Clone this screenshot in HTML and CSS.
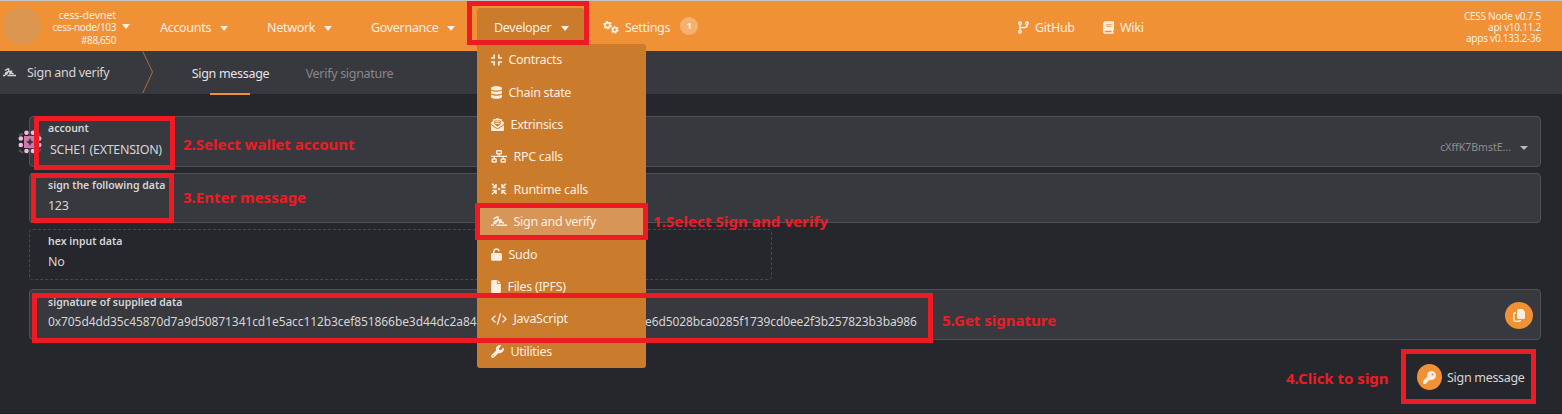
FILE: index.html
```
<!DOCTYPE html>
<html lang="en">
<head>
<meta charset="utf-8">
<title>Sign and verify</title>
<link rel="stylesheet" href="styles.css">
</head>
<body>
<div class="page">
  <header class="topbar">
    <div class="chain"><span class="logo"></span>
      <div class="chain-info"><span>cess-devnet</span><span class="tight">cess-node/103</span><span class="block">#88,650</span></div>
      <i class="caret"></i>
    </div>
    <nav class="nav">
      <a class="nav-item accounts">Accounts<i class="caret"></i></a>
      <a class="nav-item network">Network<i class="caret"></i></a>
      <a class="nav-item governance">Governance<i class="caret"></i></a>
      <div class="developer">
        <a class="nav-item dev-tab">Developer<i class="caret"></i></a>
        <div class="menu">
          <a class="menu-item"><svg width="11" height="12" viewBox="0 0 11 12" fill="none" stroke="currentColor" stroke-width="1.6"><path d="M0 4H3.200V.5M7.800 .5V4H11M0 8H3.200V11.500M7.800 11.500V8H11"/></svg>Contracts</a>
          <a class="menu-item"><svg width="11" height="13" viewBox="0 0 11 13" fill="currentColor"><path d="M0 2C0-.4 11-.4 11 2V3C11 5 0 5 0 3ZM0 4.700Q5.500 7 11 4.700V6.800C11 9 0 9 0 6.800ZM0 8.500Q5.500 11 11 8.500V11C11 13.400 0 13.400 0 11Z"/></svg>Chain state</a>
          <a class="menu-item"><svg width="13" height="13" viewBox="0 0 13 13" fill="currentColor" fill-rule="evenodd"><path d="M0 5Q0 4.500 .6 4L2 3V2Q2 1 3 1H4.500L6.500 0 8.500 1H10Q11 1 11 2V3L12.400 4Q13 4.500 13 5V6L8 9.500Q6.500 10.500 5 9.500L0 6ZM3.300 2.500V6L6 8.200Q6.500 8.500 7 8.200L9.700 6V2.500ZM4.300 3.300H8.700V4.200H4.300ZM4.300 5H8.700V5.900H4.300Z"/><path d="M0 6.900 4.500 10.200Q6.500 11.500 8.500 10.200L13 6.900V11.700Q13 13 11.700 13H1.300Q0 13 0 11.700Z"/></svg>Extrinsics</a>
          <a class="menu-item"><svg width="16" height="13" viewBox="0 0 16 13" fill="none" stroke="currentColor" stroke-width="1.400"><rect x="5.600" y=".8" width="4.800" height="3" rx=".6"/><rect x="1.200" y="9" width="4" height="3" rx=".6"/><rect x="10.200" y="9" width="4" height="3" rx=".6"/><path d="M8 4V6.300M0 6.400H16M3.300 6.400V9M12.300 6.400V9"/></svg>RPC calls</a>
          <a class="menu-item"><svg width="16" height="12" viewBox="0 0 16 12" fill="none" stroke="currentColor" stroke-width="1.500"><path d="M1 .7 5 4.300M15 .7 11 4.300M1 11.300 5 7.700M15 11.300 11 7.700M5 1V4.500H1.500M11 1V4.500H14.500M5 11V7.500H1.500M11 11V7.500H14.500"/><circle cx="8" cy="6" r="1.200" fill="currentColor" stroke="none"/></svg>Runtime calls</a>
          <a class="menu-item selected"><svg width="16" height="11" viewBox="0 0 16 11" fill="none" stroke="currentColor" stroke-width="1.400"><path d="M3 3.300V2.500L6 1Q7.500 .5 7.200 2.200L6.300 4.500Q3 5.500 2.800 7Q3 8.500 4.700 7.300L6.300 4.500L9.500 4 8.300 6.800Q9.500 7.200 10.500 5.500Q10.500 7 13 6.800M0 9.200H3M5.500 9.200H16"/></svg>Sign and verify</a>
          <a class="menu-item"><svg width="11" height="13" viewBox="0 0 448 512" fill="currentColor"><path d="M144 144c0-44.200 35.800-80 80-80c31.900 0 59.400 18.600 72.300 45.700c7.600 16 26.700 22.800 42.600 15.200s22.800-26.700 15.200-42.600C331 33.700 281.500 0 224 0C144.500 0 80 64.500 80 144v48H64c-35.300 0-64 28.700-64 64V448c0 35.300 28.700 64 64 64H384c35.300 0 64-28.700 64-64V256c0-35.300-28.700-64-64-64H144V144z"/></svg>Sudo</a>
          <a class="menu-item"><svg width="10" height="13" viewBox="0 0 384 512" fill="currentColor"><path d="M0 64C0 28.700 28.700 0 64 0H224V128c0 17.700 14.300 32 32 32H384V448c0 35.300-28.700 64-64 64H64c-35.300 0-64-28.700-64-64V64zm384 64H256V0L384 128z"/></svg>Files (IPFS)</a>
          <a class="menu-item"><svg width="16" height="12" viewBox="0 0 16 12" fill="none" stroke="currentColor" stroke-width="1.400" stroke-linecap="round" stroke-linejoin="round"><path d="M4 3 1 6 4 9M12 3 15 6 12 9M9.500 .8 6.500 11.200"/></svg>JavaScript</a>
          <a class="menu-item"><svg width="13" height="13" viewBox="0 0 512 512" fill="currentColor"><path d="M352 320c88.400 0 160-71.600 160-160c0-15.300-2.200-30.100-6.200-44.200c-3.100-10.800-16.400-13.200-24.300-5.300l-76.800 76.800c-3 3-7.100 4.700-11.300 4.700H336c-8.800 0-16-7.200-16-16V118.600c0-4.200 1.700-8.300 4.700-11.300l76.800-76.800c7.900-7.900 5.400-21.200-5.300-24.300C382.100 2.200 367.300 0 352 0C263.600 0 192 71.600 192 160c0 19.100 3.400 37.500 9.500 54.500L19.900 396.100C7.200 408.800 0 426.100 0 444.100C0 481.600 30.400 512 67.900 512c18 0 35.300-7.200 48-19.900L297.500 310.500c17 6.200 35.400 9.500 54.500 9.500zM80 408a24 24 0 1 1 0 48 24 24 0 1 1 0-48z"/></svg>Utilities</a>
        </div>
      </div>
      <a class="nav-item settings"><svg width="16" height="13" viewBox="0 0 16 13" fill="none" stroke="currentColor"><circle cx="4.500" cy="4.200" r="2.400" stroke-width="1.900"/><circle cx="4.500" cy="4.200" r="3.600" stroke-width="1.500" stroke-dasharray="1.900 1.870"/><circle cx="11.800" cy="8.800" r="2.100" stroke-width="1.800"/><circle cx="11.800" cy="8.800" r="3.200" stroke-width="1.400" stroke-dasharray="1.700 1.650"/></svg>Settings<b class="badge">1</b></a>
    </nav>
    <div class="links">
      <a class="nav-item github"><svg width="11" height="13" viewBox="0 0 11 13" fill="none" stroke="currentColor" stroke-width="1.500"><circle cx="2" cy="2.200" r="1.300"/><circle cx="9" cy="2.200" r="1.300"/><circle cx="2" cy="10.800" r="1.300"/><path d="M2 3.500V9.500M9 3.500V4.500Q9 6.400 7 6.400H4Q2 6.400 2 8"/></svg>GitHub</a>
      <a class="nav-item wiki"><svg width="11" height="13" viewBox="0 0 448 512" fill="currentColor"><path d="M96 0C43 0 0 43 0 96V416c0 53 43 96 96 96H384h32c17.700 0 32-14.300 32-32s-14.300-32-32-32V384c17.700 0 32-14.300 32-32V32c0-17.700-14.300-32-32-32H384 96zm0 384H352v64H96c-17.700 0-32-14.300-32-32s14.300-32 32-32zm32-240c0-8.800 7.200-16 16-16H336c8.800 0 16 7.200 16 16s-7.200 16-16 16H144c-8.800 0-16-7.200-16-16zm16 48H336c8.800 0 16 7.200 16 16s-7.200 16-16 16H144c-8.800 0-16-7.200-16-16s7.200-16 16-16z"/></svg>Wiki</a>
    </div>
    <div class="versions"><span>CESS Node v0.7.5</span><span>api v10.11.2</span><span>apps v0.133.2-36</span></div>
  </header>

  <div class="tabs">
    <div class="tabs-title"><svg width="13" height="9" viewBox="0 0 16 11" fill="none" stroke="currentColor" stroke-width="1.600"><path d="M3 3.300V2.500L6 1Q7.500 .5 7.200 2.200L6.300 4.500Q3 5.500 2.800 7Q3 8.500 4.700 7.300L6.300 4.500L9.500 4 8.300 6.800Q9.500 7.200 10.500 5.500Q10.500 7 13 6.800M0 9.200H3M5.500 9.200H16"/></svg>Sign and verify</div>
    <svg class="chevron" width="12" height="43" viewBox="0 0 12 43" fill="none" stroke="#a96f3a"><path d="M.8 .5 10.500 21 .8 42"/></svg>
    <a class="tab active">Sign message</a>
    <a class="tab verify">Verify signature</a>
  </div>

  <main class="form">
    <div class="field account">
      <svg class="identicon" width="24" height="24" viewBox="0 0 24 24"><path d="M1 5l4-1M19 1l3 5M1 20l4 3M20 22l3-3" stroke="#55555a" stroke-width="2"/><g fill="#efbdd9"><circle cx="8.500" cy="2.800" r="2.300"/><circle cx="15" cy="2.800" r="2.300"/><circle cx="2.800" cy="8.500" r="2.300"/><circle cx="2.800" cy="15" r="2.300"/><circle cx="21.200" cy="8.500" r="2.300"/><circle cx="21.200" cy="15" r="2.300"/><circle cx="8.500" cy="21" r="2.300"/><circle cx="15" cy="21" r="2.300"/></g><path d="M6 6h12v12H6z" fill="#d276ad"/><path d="M12 8l1.300 2.700L16 12l-2.700 1.300L12 16l-1.300-2.700L8 12l2.700-1.300z" fill="#39393e"/></svg>
      <label>account</label><div class="value name">SCHE1 (EXTENSION)</div>
      <div class="address">cXffK7BmstE...<i class="caret small"></i></div>
    </div>
    <div class="field data"><label>sign the following data</label><div class="value">123</div></div>
    <div class="field hex"><label>hex input data</label><div class="value">No</div></div>
    <div class="field signature"><label>signature of supplied data</label>
      <div class="value sig"><span class="sig-start">0x705d4dd35c45870d7a9d50871341cd1e5acc112b3cef851866be3d44dc2a84</span><span class="sig-end">e6d5028bca0285f1739cd0ee2f3b257823b3ba986</span></div>
      <div class="copy"><svg width="12" height="13" viewBox="0 0 12 13"><path d="M3 4H1.500Q.8 4 .8 4.700V11.500Q.8 12.200 1.500 12.200H6.500Q7.200 12.200 7.200 11.500V11" fill="none" stroke="currentColor" stroke-width="1.500"/><path d="M5.500 0H9.500L12 2.500V8.500Q12 10 10.500 10H5.500Q4 10 4 8.500V1.500Q4 0 5.500 0Z" fill="currentColor"/></svg></div>
    </div>
    <div class="actions"><span class="key"><svg width="13" height="13" viewBox="0 0 512 512" fill="currentColor"><path d="M336 352c97.200 0 176-78.800 176-176S433.200 0 336 0S160 78.800 160 176c0 18.700 2.900 36.800 8.300 53.700L7 391c-4.500 4.500-7 10.600-7 17v80c0 13.300 10.700 24 24 24h80c13.300 0 24-10.700 24-24V448h40c13.300 0 24-10.700 24-24V384h40c6.400 0 12.500-2.500 17-7l33.300-33.300c16.900 5.400 35 8.300 53.700 8.300zM376 96a40 40 0 1 1 0 80 40 40 0 1 1 0-80z"/></svg></span><span class="sign-text">Sign message</span></div>
  </main>

  <div class="mark m-dev"></div>
  <div class="mark m-account"></div>
  <div class="mark m-data"></div>
  <div class="mark m-verify"></div>
  <div class="mark m-signature"></div>
  <div class="mark m-sign"></div>
  <div class="note n1">1.Select Sign and verify</div>
  <div class="note n2">2.Select wallet account</div>
  <div class="note n3">3.Enter message</div>
  <div class="note n4">4.Click to sign</div>
  <div class="note n5">5.Get signature</div>
</div>
</body>
</html>
```
FILE: styles.css
```
* { box-sizing: border-box; }
body { margin: 0; background: #26272c; font-family: "Noto Sans", "Open Sans", sans-serif; font-size: 12.5px; letter-spacing: -.3px; color: #d5d5d6; }
.page { position: relative; width: 1562px; height: 414px; overflow: hidden; border-bottom: 1px solid #202024; }
svg { display: block; flex: none; }

.topbar { display: grid; grid-template-columns: 160px 856px 300px 1fr; height: 51px; background: #f19135; border-top: 1px solid #c8c8c8; color: #fdeee0; }
.chain { display: flex; align-items: center; padding-left: 3px; }
.logo { width: 38px; height: 38px; border-radius: 50%; background: #dc964f; }
.chain-info { width: 75px; display: flex; flex-direction: column; align-items: flex-end; font-size: 10.5px; letter-spacing: -.05px; line-height: 12.3px; padding-top: 3px; }
.tight { font-size: 10px; letter-spacing: -.35px; }
.block { font-size: 10px; letter-spacing: -.4px; }
.caret { width: 0; height: 0; border: 4px solid transparent; border-top: 5px solid currentColor; border-bottom: 0; }
.chain .caret { margin-left: 6px; }
.nav, .links { display: flex; align-items: stretch; }
.nav-item { display: flex; align-items: center; padding-top: 3px; white-space: nowrap; }
.nav-item .caret { margin-left: auto; margin-top: 2px; }
.accounts { width: 68px; margin-right: 39px; }
.network { width: 65px; margin-right: 39px; }
.governance { width: 84px; margin-right: 22px; }
.developer { position: relative; width: 107px; padding-top: 7px; }
.dev-tab { height: 43px; background: #cb7b2c; border-radius: 3px 3px 0 0; padding: 0 15px 4px 17px; }
.menu { position: absolute; z-index: 2; top: 43px; left: 0; width: 169px; height: 324px; display: flex; flex-direction: column; background: #cb7b2c; border-radius: 0 3px 3px 3px; }
.menu-item { flex: 1; display: flex; align-items: center; gap: 6.5px; padding: 0 0 1px 14px; white-space: nowrap; }
.menu-item.selected { background: #d79657; }
.settings { margin-left: 19px; gap: 6px; }
.badge { width: 18px; height: 18px; margin: -4px 0 0 4px; border-radius: 50%; background: #f5b172; font-size: 9.5px; line-height: 18px; text-align: center; }
.links .nav-item { gap: 6px; }
.github { width: 87px; padding-left: 2px; }
.versions { display: flex; flex-direction: column; align-items: flex-end; padding: 10px 21px 0 0; font-size: 10px; letter-spacing: -.25px; line-height: 11px; white-space: nowrap; }

.tabs { display: flex; height: 43px; background: #38393e; }
.tabs-title { width: 142px; display: flex; align-items: center; gap: 11px; padding-left: 3px; }
.tab { position: relative; display: flex; align-items: center; justify-content: center; padding-top: 2px; margin-left: 38px; width: 77px; white-space: nowrap; color: #e4e4e5; }
.tab.active::after { content: ""; position: absolute; bottom: -1px; left: 18px; width: 40px; height: 2px; background: #f19135; }
.tab.verify { color: #88888b; margin-left: 37px; width: 87px; }

.form { padding: 22px 21px 0 29px; display: flex; flex-direction: column; }
.field { position: relative; height: 51px; padding: 4px 18px; background: #38393e; border: 1px solid #505155; border-radius: 4px; }
.field label { display: block; height: 15px; font-size: 10.5px; letter-spacing: 0; line-height: 14px; font-weight: 600; }
.value { display: flex; height: 24px; line-height: 26px; white-space: nowrap; }
.account .value { padding: 1px 0 0 2px; }
.identicon { position: absolute; left: -12px; top: 13px; }
.address { position: absolute; right: 12px; top: 22px; display: flex; align-items: center; gap: 9px; font-size: 10.5px; letter-spacing: 0; line-height: 17px; color: #8e8e91; }
.small { color: #b9b9bb; border-top-width: 4px; }
.data { margin-top: 6px; height: 50px; }
.hex { margin-top: 6px; width: 743px; background: none; border: 1px dashed #48494d; }
.signature { margin-top: 9px; padding-top: 5px; }
.signature label { height: 14px; }
.sig-start { width: 429px; overflow: hidden; letter-spacing: -.085px; }
.sig-end { margin-left: 168px; }
.sig { font-size: 12px; letter-spacing: -.11px; }
.copy, .key { display: flex; align-items: center; justify-content: center; border-radius: 50%; background: #f19135; color: #fdeee0; }
.copy { position: absolute; right: 7px; top: 12px; width: 28px; height: 27px; }
.actions { display: flex; align-items: center; gap: 5px; margin: 24px 0 0 1388px; white-space: nowrap; }
.key { width: 25px; height: 26px; }

.mark { position: absolute; z-index: 3; border: 5px solid #ed1c24; }
.m-dev { left: 467px; top: 1px; width: 122px; height: 44px; }
.m-account { left: 34px; top: 116px; width: 141px; height: 54px; }
.m-data { left: 31px; top: 173px; width: 143px; height: 50px; }
.m-verify { left: 475px; top: 203px; width: 173px; height: 37px; }
.m-signature { left: 32px; top: 293px; width: 901px; height: 50px; }
.m-sign { left: 1401px; top: 349px; width: 135px; height: 55px; }
.note { position: absolute; z-index: 3; color: #ed1c24; font-size: 15px; letter-spacing: 0; line-height: 20px; font-weight: 700; white-space: nowrap; }
.n1 { left: 653px; top: 211px; letter-spacing: .1px; }
.n2 { left: 183px; top: 134px; }
.n3 { left: 183px; top: 187px; }
.n4 { left: 1286px; top: 368px; }
.n5 { left: 942px; top: 310px; }
```
